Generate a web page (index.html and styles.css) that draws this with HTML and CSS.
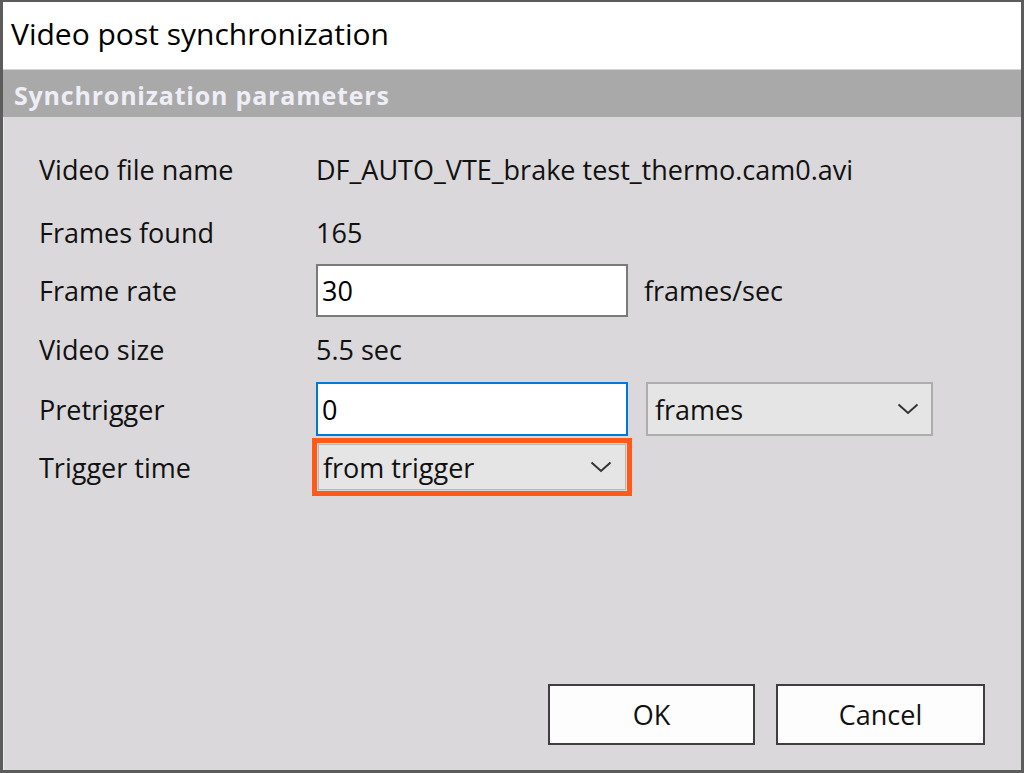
FILE: index.html
```html
<!DOCTYPE html>
<html lang="en">
<head>
    <meta charset="UTF-8">
    <title>Video post synchronization</title>
    <link rel="stylesheet" href="styles.css">
</head>
<body>
    <div class="window">
        <div class="titlebar">Video post synchronization</div>
        <div class="section-head">Synchronization parameters</div>
        <div class="content">
            <div class="params">
                <div class="label">Video file name</div>
                <div class="value">DF_AUTO_VTE_brake test_thermo.cam0.avi</div>

                <div class="label">Frames found</div>
                <div class="value">165</div>

                <div class="label">Frame rate</div>
                <div class="value field-row">
                    <input class="field" type="text" value="30">
                    <span class="unit">frames/sec</span>
                </div>

                <div class="label">Video size</div>
                <div class="value">5.5 sec</div>

                <div class="label">Pretrigger</div>
                <div class="value field-row">
                    <input class="field focused" type="text" value="0">
                    <div class="combo combo-units">
                        <span>frames</span>
                        <svg class="chevron" width="22" height="12" viewBox="0 0 22 12"><polyline points="1.5,1.5 11,10 20.5,1.5" fill="none" stroke="#333" stroke-width="2"/></svg>
                    </div>
                </div>

                <div class="label">Trigger time</div>
                <div class="value field-row">
                    <div class="combo combo-trigger">
                        <span>from trigger</span>
                        <svg class="chevron" width="22" height="12" viewBox="0 0 22 12"><polyline points="1.5,1.5 11,10 20.5,1.5" fill="none" stroke="#333" stroke-width="2"/></svg>
                    </div>
                </div>
            </div>

            <div class="buttons">
                <button class="btn">OK</button>
                <button class="btn btn-cancel">Cancel</button>
            </div>
        </div>
    </div>
</body>
</html>
```

FILE: styles.css
```css
html, body {
    margin: 0;
    height: 100%;
}

body {
    background-color: #5c5c5c;
    font-family: 'Open Sans', 'Noto Sans', sans-serif;
    color: #111;
}

.window {
    box-sizing: border-box;
    height: 773px;
    width: 1024px;
    border: 3px solid #5c5c5c;
    border-top-width: 2px;
    display: flex;
    flex-direction: column;
    background-color: #dad8db;
}

.titlebar {
    height: 67px;
    background-color: #fff;
    border-bottom: 1px solid #d4d4d4;
    font-size: 30px;
    line-height: 64px;
    padding-left: 8px;
    color: #000;
}

.section-head {
    height: 47px;
    background-color: #a9a9a9;
    color: #eeeef6;
    font-weight: bold;
    font-size: 25px;
    line-height: 50px;
    padding-left: 11px;
    letter-spacing: 0.8px;
}

.content {
    flex: 1;
    display: flex;
    flex-direction: column;
    justify-content: space-between;
    padding: 20px 36px 25px 35px;
    border-left: 1px solid #eceaec;
}

.params {
    display: grid;
    grid-template-columns: 277px 1fr;
    grid-template-rows: 64px 63px 53px 65px 54px 62px;
    align-items: center;
    font-size: 27px;
}

.label, .value {
    white-space: nowrap;
}

.field-row {
    display: flex;
    align-items: center;
    height: 100%;
}

.field {
    box-sizing: border-box;
    width: 312px;
    height: 100%;
    border: 2px solid #7a7a7a;
    background: #fff;
    font: inherit;
    color: #000;
    padding: 0 4px;
    margin: 0;
    outline: none;
}

.field.focused {
    border-color: #0078d7;
}

.unit {
    margin-left: 16px;
}

.combo {
    box-sizing: border-box;
    display: flex;
    align-items: center;
    justify-content: space-between;
    background-color: #e5e5e5;
    border: 2px solid #adadad;
    padding: 0 12px 0 7px;
}

.combo-units {
    width: 287px;
    height: 100%;
    margin-left: 18px;
}

.combo-trigger {
    width: 308px;
    height: 46px;
    margin-left: 2px;
    border: 1px solid #b8b8b8;
    outline: 5px solid #ff5a1a;
    outline-offset: 1px;
    padding-left: 4px;
    padding-right: 13px;
}

.chevron {
    display: block;
}

.buttons {
    display: flex;
    justify-content: flex-end;
    gap: 21px;
}

.btn {
    box-sizing: border-box;
    width: 207px;
    height: 61px;
    border: 2px solid #3f3f3f;
    background-color: #fdfdfd;
    font: inherit;
    font-size: 27px;
    color: #111;
    padding: 0;
}

.btn-cancel {
    width: 209px;
}
```
